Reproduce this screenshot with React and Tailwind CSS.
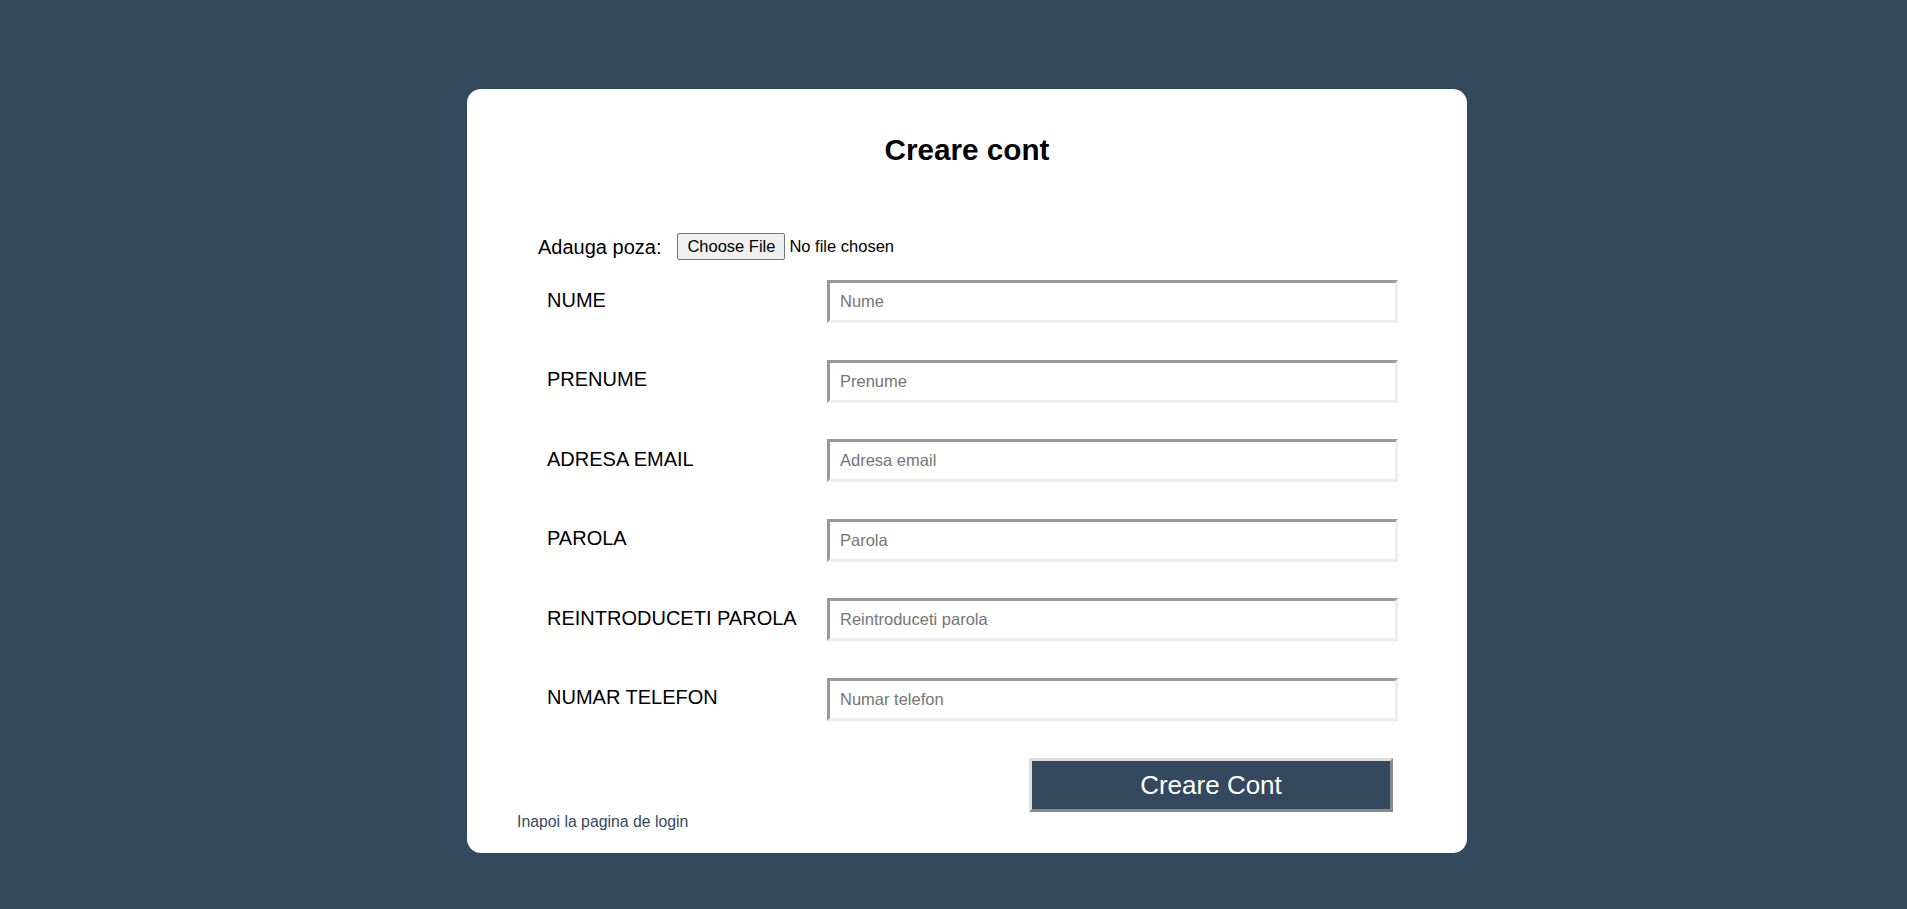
import React from 'react';

const fields = [
  { label: 'NUME', placeholder: 'Nume', type: 'text' },
  { label: 'PRENUME', placeholder: 'Prenume', type: 'text' },
  { label: 'ADRESA EMAIL', placeholder: 'Adresa email', type: 'email' },
  { label: 'PAROLA', placeholder: 'Parola', type: 'password' },
  { label: 'REINTRODUCETI PAROLA', placeholder: 'Reintroduceti parola', type: 'password' },
  { label: 'NUMAR TELEFON', placeholder: 'Numar telefon', type: 'tel' },
];

export default function App() {
  return (
    <div
      className="min-h-screen bg-[#34495e] flex justify-center pl-[27px] pt-[89px] pb-[50px]"
      style={{ fontFamily: '"Liberation Sans", Arial, sans-serif' }}
    >
      <div className="w-[1000px] h-[764px] bg-white rounded-[14px] shadow-[0_0_1px_rgba(0,0,0,0.4)] flex flex-col">
        <h2 className="pt-[44px] text-center text-[29.7px] leading-[34px] font-bold text-black">
          Creare cont
        </h2>

        <div className="mt-[66px] pl-[71px] flex items-center h-[27px] text-black">
          <span className="text-[20px] leading-none mr-[16px]">Adauga poza:</span>
          <label className="flex items-center cursor-pointer">
            <span className="h-[27px] w-[108px] flex items-center justify-center border border-[#767676] rounded-[2px] bg-[#efefef] text-[16.5px] leading-none">
              Choose File
            </span>
            <span className="ml-[4px] text-[16.5px] leading-none">No file chosen</span>
            <input type="file" className="hidden" />
          </label>
        </div>

        <div className="mt-[20px] pl-[80px] flex flex-col gap-[36.5px]">
          {fields.map((f) => (
            <div key={f.label} className="grid grid-cols-[280px_571px] items-center">
              <span className="text-[20px] leading-[23px] text-black -mt-[3px]">{f.label}</span>
              <input
                type={f.type}
                placeholder={f.placeholder}
                className="h-[43px] w-[571px] border-[3px] border-t-[#999999] border-l-[#999999] border-b-[#eeeeee] border-r-[#eeeeee] bg-white px-[10px] text-[16.5px] text-black placeholder:text-[#757575] outline-none"
              />
            </div>
          ))}
        </div>

        <div className="mt-[37.5px] flex justify-end pr-[74px]">
          <button className="w-[364px] h-[54px] bg-[#34495e] text-white text-[26px] leading-none border-[3px] border-t-[#dddddd] border-l-[#dddddd] border-b-[#8a8a8a] border-r-[#8a8a8a]">
            Creare Cont
          </button>
        </div>

        <div className="pl-[50px] -mt-[2px]">
          <a href="#" className="text-[15.8px] leading-[18px] text-[#34495e]">
            Inapoi la pagina de login
          </a>
        </div>
      </div>
    </div>
  );
}
